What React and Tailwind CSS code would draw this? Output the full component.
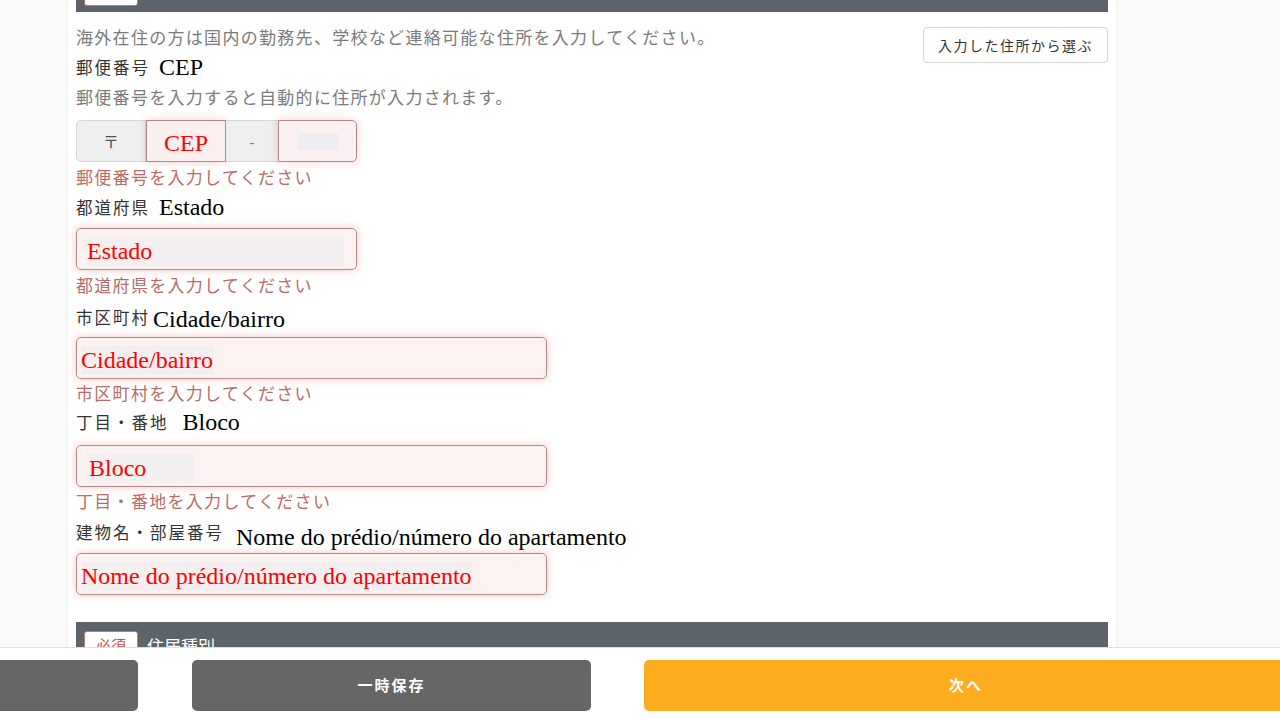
import React from 'react';

const jp = { fontFamily: '"Noto Sans CJK JP", "Noto Sans", sans-serif' };
const serif = { fontFamily: '"Liberation Serif", "Noto Sans CJK JP", serif' };

const ErrorText = ({ children, h = 'h-[30px] leading-[30px]' }) => (
  <p className={`${h} text-[17px] tracking-[1.3px] text-[#b86c67]`} style={jp}>
    {children}
  </p>
);

const LabelRow = ({ label, overlay, gap, h, pt = '' }) => (
  <div className={`flex items-center ${h}`}>
    <span className="text-[16.5px] tracking-[2px] text-[#333]" style={jp}>{label}</span>
    <span className={`${gap} ${pt} text-[24px] leading-[28px] text-black`} style={serif}>{overlay}</span>
  </div>
);

const RedInput = ({ text, width, mt, pl, ghost }) => (
  <div
    className={`${width} ${mt} h-[42px] rounded-[5px] border-[1.5px] border-[#bd868b] bg-[#fcf2f2] shadow-[0_0_8px_rgba(225,70,70,0.3)] flex items-end pb-[4px] ${pl}`}
  >
    <span className={`${ghost} bg-[#f3eff1] text-[24px] leading-[28px] text-[#ff0000]`} style={serif}>
      {text}
    </span>
  </div>
);

export default function App() {
  return (
    <div className="h-[720px] w-[1280px] flex flex-col bg-[#fafafa] overflow-hidden">
      <main className="flex-1 overflow-hidden">
        <div className="flow-root ml-[68px] w-[1048px] h-full bg-white px-[8px] shadow-[0_0_4px_rgba(0,0,0,0.07)]">
          {/* section header, mostly scrolled off */}
          <div className="-mt-[28px] h-[40px] bg-[#5c636b] flex items-center px-[8px]">
            <span className="h-[28px] w-[54px] rounded-[3px] border border-[#c9787a] bg-white" />
          </div>

          <div className="mt-[15px] flex justify-between items-start">
            <div>
              <p className="h-[20px] leading-[20px] text-[17px] tracking-[1.3px] text-[#7b7b7b]" style={jp}>
                海外在住の方は国内の勤務先、学校など連絡可能な住所を入力してください。
              </p>
              <LabelRow label="郵便番号" overlay="CEP" gap="ml-[9px]" h="h-[40px]" />
              <p className="h-[20px] leading-[20px] text-[17px] tracking-[1.3px] text-[#7b7b7b]" style={jp}>
                郵便番号を入力すると自動的に住所が入力されます。
              </p>
              <div className="mt-[13px] flex h-[42px] w-[281px]">
                <div className="w-[70px] flex items-center justify-center rounded-l-[5px] border border-[#d6d6d6] bg-[#efefef] text-[16px] text-[#555]" style={jp}>
                  〒
                </div>
                <div className="w-[80px] flex items-center justify-center border-[1.5px] border-[#b5868a] bg-[#fbeff0] shadow-[0_0_8px_rgba(225,70,70,0.28)]">
                  <span className="pt-[4px] text-[24px] leading-[28px] text-[#ff0000]" style={serif}>CEP</span>
                </div>
                <div className="w-[52px] flex items-center justify-center border-y border-[#d6d6d6] bg-[#efefef] text-[16px] text-[#888]" style={jp}>
                  -
                </div>
                <div className="w-[79px] flex items-center justify-center rounded-r-[5px] border-[1.5px] border-[#b5868a] bg-[#fbf1f2] shadow-[0_0_8px_rgba(225,70,70,0.28)]">
                  <span className="h-[17px] w-[40px] bg-[#eeedf2]" />
                </div>
              </div>
            </div>
            <button className="h-[36px] w-[185px] rounded-[4px] border border-[#d4d4d4] bg-white text-[14px] tracking-[1.5px] text-[#333]" style={jp}>
              入力した住所から選ぶ
            </button>
          </div>

          <ErrorText>郵便番号を入力してください</ErrorText>
          <LabelRow label="都道府県" overlay="Estado" gap="ml-[9px]" h="h-[30px]" />
          <RedInput text="Estado" width="w-[281px]" mt="mt-[6px]" pl="pl-[10px]" ghost="pr-[192px]" />

          <ErrorText>都道府県を入力してください</ErrorText>
          <LabelRow label="市区町村" overlay="Cidade/bairro" gap="ml-[3px]" h="h-[34px]" pt="pt-[4px]" />
          <RedInput text="Cidade/bairro" width="w-[471px]" mt="mt-[3px]" pl="pl-[4px]" ghost="" />

          <ErrorText h="h-[28px] leading-[28px]">市区町村を入力してください</ErrorText>
          <LabelRow label="丁目・番地" overlay="Bloco" gap="ml-[14px]" h="h-[30px]" />
          <RedInput text="Bloco" width="w-[471px]" mt="mt-[8px]" pl="pl-[12px]" ghost="pr-[48px]" />

          <ErrorText h="h-[28px] leading-[28px]">丁目・番地を入力してください</ErrorText>
          <LabelRow label="建物名・部屋番号" overlay="Nome do prédio/número do apartamento" gap="ml-[12px]" h="h-[34px]" pt="pt-[9px]" />
          <RedInput text="Nome do prédio/número do apartamento" width="w-[471px]" mt="mt-[4px]" pl="pl-[4px]" ghost="" />

          {/* next section header */}
          <div className="mt-[27px] h-[44px] bg-[#5c636b] flex items-start gap-[9px] px-[8px] pt-[9px]">
            <span className="h-[28px] w-[54px] flex items-center justify-center rounded-[3px] border border-[#c9787a] bg-white text-[15px] text-[#c0504d]" style={jp}>
              必須
            </span>
            <span className="pt-[2px] text-[17px] text-white" style={jp}>住居種別</span>
          </div>
        </div>
      </main>

      <footer className="h-[73px] shrink-0 border-t border-[#dedede] bg-white flex items-start pt-[12px]">
        <button className="-ml-[8px] h-[51px] w-[146px] rounded-[5px] bg-[#666666]" />
        <button className="ml-[54px] h-[51px] w-[399px] rounded-[5px] bg-[#666666] text-[15px] font-bold tracking-[2px] text-white" style={jp}>
          一時保存
        </button>
        <button className="ml-[53px] -mr-[8px] h-[51px] flex-1 rounded-[5px] bg-[#fcac1e] text-[15px] font-bold tracking-[2px] text-white" style={jp}>
          次へ
        </button>
      </footer>
    </div>
  );
}
